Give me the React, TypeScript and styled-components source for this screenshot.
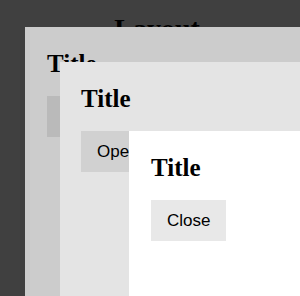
import React from "react";
import styled, { createGlobalStyle } from "styled-components";

const GlobalStyle = createGlobalStyle`
  html, body {
    margin: 0;
    padding: 0;
    background: #404040;
    overflow: hidden;
  }
  body {
    font-family: "Liberation Serif", "Times New Roman", serif;
  }
`;

interface Layer {
  left: number;
  top: number;
  surface: string;
  button: string;
  label: string;
}

const layers: Layer[] = [
  { left: 25, top: 27, surface: "#cccccc", button: "#bababa", label: "Open" },
  { left: 60, top: 62, surface: "#e4e4e4", button: "#d1d1d1", label: "Open" },
  { left: 129, top: 131, surface: "#ffffff", button: "#e8e8e8", label: "Close" },
];

const App: React.FC = () => {
  return (
    <>
      <GlobalStyle />
      <Page>
        <Heading>Layout</Heading>
      </Page>
      {layers.map((layer, i) => (
        <Modal key={i} $left={layer.left} $top={layer.top} $surface={layer.surface} $first={i === 1}>
          <Title>Title</Title>
          <Button type="button" $tone={layer.button}>
            {layer.label}
          </Button>
        </Modal>
      ))}
    </>
  );
};

const Page = styled.div`
  display: flex;
  justify-content: center;
  padding: 13px 0 0 14px;
`;

const Heading = styled.h1`
  margin: 0;
  font-size: 28px;
  line-height: 32px;
  font-weight: 700;
  color: #000;
`;

const Modal = styled.div<{ $left: number; $top: number; $surface: string; $first?: boolean }>`
  position: fixed;
  left: ${(p) => p.$left}px;
  top: ${(p) => p.$top}px;
  width: 420px;
  height: 420px;
  box-sizing: border-box;
  padding: 23px ${(p) => (p.$first ? 21 : 22)}px;
  background: ${(p) => p.$surface};
  display: flex;
  flex-direction: column;
  align-items: flex-start;
`;

const Title = styled.h2`
  margin: 0 0 18px;
  font-size: 25px;
  line-height: 28px;
  font-weight: 700;
  color: #000;
`;

const Button = styled.button<{ $tone: string }>`
  border: 0;
  border-radius: 0;
  background: ${(p) => p.$tone};
  color: #000;
  font-family: "Liberation Sans", Arial, sans-serif;
  font-size: 17px;
  line-height: 19px;
  padding: 11px 16px;
  cursor: pointer;
`;

export default App;
